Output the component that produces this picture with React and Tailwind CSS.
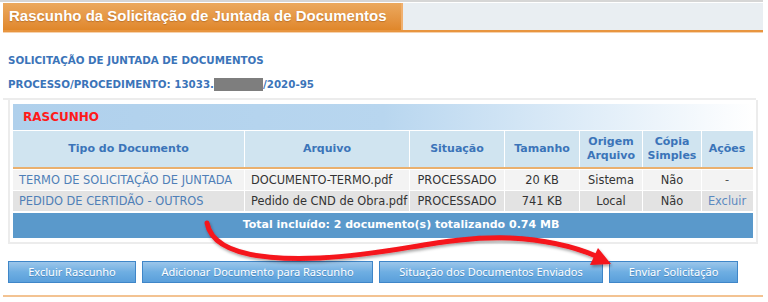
const cols = [
  { label: 'Tipo do Documento', w: 'w-[232px]' },
  { label: 'Arquivo', w: 'w-[165px]' },
  { label: 'Situação', w: 'w-[95px]' },
  { label: 'Tamanho', w: 'w-[75px]' },
  { label: 'Origem Arquivo', w: 'w-[63px]' },
  { label: 'Cópia Simples', w: 'w-[59px]' },
  { label: 'Ações', w: 'w-[50px]' },
];

const rows = [
  { tipo: 'TERMO DE SOLICITAÇÃO DE JUNTADA', arquivo: 'DOCUMENTO-TERMO.pdf', situacao: 'PROCESSADO', tamanho: '20 KB', origem: 'Sistema', copia: 'Não', acao: '-', bg: 'bg-[#f3f3f3]' },
  { tipo: 'PEDIDO DE CERTIDÃO - OUTROS', arquivo: 'Pedido de CND de Obra.pdf', situacao: 'PROCESSADO', tamanho: '741 KB', origem: 'Local', copia: 'Não', acao: 'Excluir', bg: 'bg-[#e3e3e3]' },
];

const buttons = [
  { label: 'Excluir Rascunho', w: 'w-[128px]' },
  { label: 'Adicionar Documento para Rascunho', w: 'w-[231px]' },
  { label: 'Situação dos Documentos Enviados', w: 'w-[224px]' },
  { label: 'Enviar Solicitação', w: 'w-[129px]' },
];

function Arrow() {
  return (
    <svg className="absolute left-0 top-0 pointer-events-none" width="768" height="302" viewBox="0 0 768 302">
      <defs>
        <filter id="sh" x="-10%" y="-10%" width="120%" height="140%">
          <feDropShadow dx="1" dy="2" stdDeviation="1.5" floodColor="#000" floodOpacity="0.35" />
        </filter>
      </defs>
      <g filter="url(#sh)">
        <path
          d="M207 223 C 212 250, 250 261, 320 258 C 400 254, 440 236, 510 238 C 550 240, 575 247, 596 256"
          fill="none"
          stroke="#f5141c"
          strokeWidth="5"
          strokeLinecap="round"
        />
        <path d="M598 248 L611 264 L590 265 Z" fill="#f5141c" />
      </g>
    </svg>
  );
}

export default function App() {
  return (
    <div className="relative w-[768px] h-[302px] bg-white overflow-hidden font-['DejaVu_Sans',Verdana,sans-serif]">
      <div className="h-[2px] bg-[#d6d6d6] mr-[5px]" />
      <div className="mt-px ml-[3px] mr-[5px]">
        <div className="flex h-[27px] bg-[#e9eef2]">
          <div className="w-[400px] bg-gradient-to-b from-[#eba95e] to-[#e0872a] px-[6px] flex items-center border-r-2 border-[#f0b070]">
            <span className="whitespace-nowrap text-white font-bold text-[15px] font-['Liberation_Sans',Arial,sans-serif] [text-shadow:0_1px_1px_rgba(120,60,0,0.35)]">
              Rascunho da Solicitação de Juntada de Documentos
            </span>
          </div>
        </div>
        <div className="h-[2px] bg-[#e8953f]" />
        <div className="h-px bg-[#f6d2ad]" />
      </div>

      <div className="px-[8px] pt-[20px] text-[10.3px] font-bold text-[#3b74b9] leading-[14px]">
        <div>SOLICITAÇÃO DE JUNTADA DE DOCUMENTOS</div>
        <div className="mt-[10px] flex items-center">
          PROCESSO/PROCEDIMENTO: 13033.
          <span className="inline-block w-[49px] h-[13px] bg-[#7e7e7e]" />
          /2020-95
        </div>
      </div>

      <div className="mt-[7px] ml-[3px] mr-[12px] h-[2px] bg-[#ececec]" />

      <div className="ml-[8px] w-[750px] border-2 border-t-0 border-[#ececec] px-[3px] pt-[4px] pb-[4px]">
        <div className="h-[26px] flex items-center pl-[10px] bg-gradient-to-r from-[#afd0ec] via-[#b8d6ef] to-white text-[12px] font-bold text-[#ff1a1a]">
          RASCUNHO
        </div>
        <div className="flex h-[37px] bg-[#d0e4f0] border-t border-white">
          {cols.map((c, i) => (
            <div
              key={c.label}
              className={`${c.w} flex items-center justify-center text-center text-[11px] font-bold text-[#3b74b9] leading-[14px] px-[2px] ${i < cols.length - 1 ? 'border-r border-white' : ''}`}
            >
              {c.label}
            </div>
          ))}
        </div>
        <div className="h-[2px] bg-[#eab06f]" />
        {rows.map((r) => (
          <div key={r.tipo} className={`flex h-[21px] ${r.bg} border-t border-white first:border-t-0 text-[11.4px] leading-[14px] text-[#333]`}>
            <div className="w-[232px] border-r border-white flex items-center pl-[6px] text-[#4f7fb7] whitespace-nowrap">{r.tipo}</div>
            <div className="w-[165px] border-r border-white flex items-center pl-[6px] whitespace-nowrap">{r.arquivo}</div>
            <div className="w-[95px] border-r border-white flex items-center justify-center">{r.situacao}</div>
            <div className="w-[75px] border-r border-white flex items-center justify-center">{r.tamanho}</div>
            <div className="w-[63px] border-r border-white flex items-center justify-center">{r.origem}</div>
            <div className="w-[59px] border-r border-white flex items-center justify-center">{r.copia}</div>
            <div className={`w-[50px] flex items-center justify-center ${r.acao === '-' ? 'text-[#555]' : 'text-[#5b89c0]'}`}>{r.acao}</div>
          </div>
        ))}
        <div className="h-[27px] bg-[#5a99cb] border-t-2 border-white flex items-center justify-center pl-[36px] text-white font-bold text-[11px]">
          Total incluído: 2 documento(s) totalizando 0.74 MB
        </div>
      </div>

      <div className="flex gap-[6px] ml-[8px] mt-[17px]">
        {buttons.map((b) => (
          <button
            key={b.label}
            className={`${b.w} h-[22px] border border-[#3f86c8] bg-gradient-to-b from-[#9cc6ea] via-[#6eaee2] to-[#5a9fdb] text-white text-[11px] font-['Noto_Sans',Tahoma,sans-serif] [text-shadow:0_1px_0_rgba(0,40,90,0.25)]`}
          >
            {b.label}
          </button>
        ))}
      </div>

      <div className="mt-[12px] ml-[3px] mr-[5px] h-[2px] bg-[#f3c392]" />

      <Arrow />
    </div>
  );
}
